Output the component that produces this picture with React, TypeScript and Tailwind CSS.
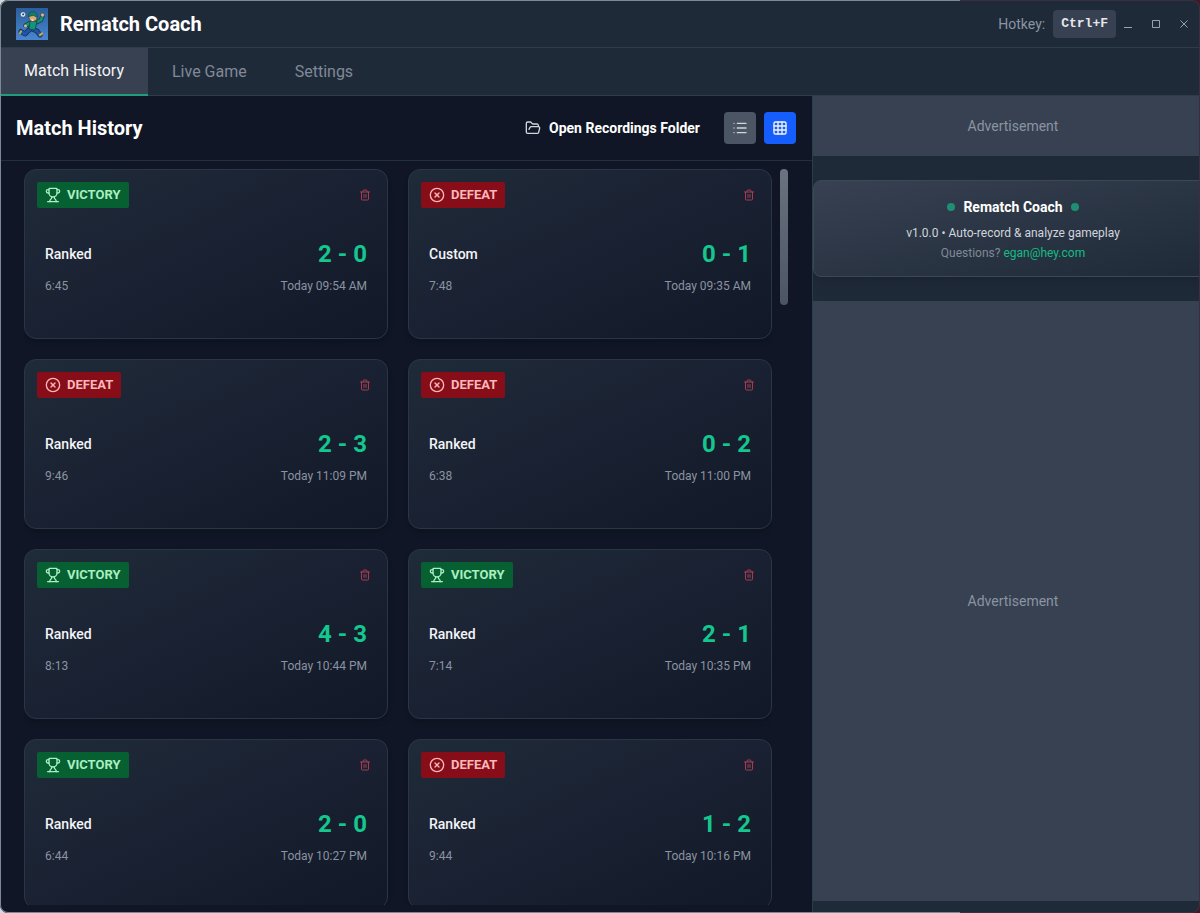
import { CircleX, FolderOpen, Grid3X3, List, Trash2, Trophy } from "lucide-react";

interface Match {
  result: "victory" | "defeat";
  mode: string;
  score: string;
  duration: string;
  playedAt: string;
}

const matches: Match[] = [
  { result: "victory", mode: "Ranked", score: "2 - 0", duration: "6:45", playedAt: "Today 09:54 AM" },
  { result: "defeat", mode: "Custom", score: "0 - 1", duration: "7:48", playedAt: "Today 09:35 AM" },
  { result: "defeat", mode: "Ranked", score: "2 - 3", duration: "9:46", playedAt: "Today 11:09 PM" },
  { result: "defeat", mode: "Ranked", score: "0 - 2", duration: "6:38", playedAt: "Today 11:00 PM" },
  { result: "victory", mode: "Ranked", score: "4 - 3", duration: "8:13", playedAt: "Today 10:44 PM" },
  { result: "victory", mode: "Ranked", score: "2 - 1", duration: "7:14", playedAt: "Today 10:35 PM" },
  { result: "victory", mode: "Ranked", score: "2 - 0", duration: "6:44", playedAt: "Today 10:27 PM" },
  { result: "defeat", mode: "Ranked", score: "1 - 2", duration: "9:44", playedAt: "Today 10:16 PM" },
];

function Logo() {
  return (
    <svg viewBox="0 0 32 32" className="size-8 shrink-0" aria-hidden="true">
      <defs>
        <linearGradient id="sky" x1="0" y1="0" x2="0" y2="1">
          <stop offset="0" stopColor="#2a5f9e" />
          <stop offset="1" stopColor="#4a86cf" />
        </linearGradient>
      </defs>
      <rect width="32" height="32" fill="url(#sky)" />
      <g strokeLinecap="round" strokeLinejoin="round" fill="none">
        <path d="M14 21 9 26 5 23.5M16 21l5 2 3 4" stroke="#17304f" strokeWidth="5" />
        <path d="M14 21 9 26 5 23.5M16 21l5 2 3 4" stroke="#1d55a8" strokeWidth="3.4" />
        <path d="m5 23.5-1 1.5M24 27l2-1.5" stroke="#c9a04e" strokeWidth="2.2" />
        <path d="M20 14.5 25 12l1.5-4M14 15l-4.5 2.5" stroke="#15433c" strokeWidth="4.5" />
        <path d="M20 14.5 25 12l1.5-4M14 15l-4.5 2.5" stroke="#15917a" strokeWidth="3" />
      </g>
      <path d="m14 13 7 .5-2 8.5-6-1z" fill="#13957c" stroke="#15433c" strokeWidth=".8" />
      <circle cx="26.5" cy="7" r="2" fill="#d9b48a" stroke="#2a3f50" strokeWidth=".6" />
      <circle cx="9.5" cy="18" r="1.5" fill="#d9b48a" />
      <circle cx="17" cy="9.5" r="4" fill="#d9a978" stroke="#2a3540" strokeWidth=".6" />
      <path d="M12 8.5c0-4 3-5.5 6-4.800 3 .8 4 3 3.5 5.800l-4-2z" fill="#127a68" stroke="#15433c" strokeWidth=".6" />
      <path d="m14.500 11.500 3.500.2-1.500 1.300z" fill="#fff" />
      <circle cx="7" cy="6.5" r="2.8" fill="#dbe7f5" stroke="#27456b" strokeWidth=".7" />
      <path d="m6 6 1.200-.8L8.300 6l-.5 1.300H6.500z" fill="#27456b" />
    </svg>
  );
}

function TitleBar() {
  return (
    <header className="flex h-12 shrink-0 items-center justify-between border-b border-[#2d3c4b] bg-[#1f2a39] pr-1 pl-4">
      <div className="flex items-center gap-3">
        <Logo />
        <h1 className="text-xl font-bold text-white">Rematch Coach</h1>
      </div>
      <div className="flex items-center">
        <span className="mr-2 text-sm text-[#8a94a3]">Hotkey:</span>
        <kbd className="rounded bg-[#374151] px-2 py-1 font-['Liberation_Mono',monospace] text-[13px] leading-5 font-bold text-gray-200">
          Ctrl+F
        </kbd>
        <div className="flex gap-1 text-[#98a1ae]">
          <button aria-label="Minimize" className="flex size-6 items-center justify-center">
            <svg viewBox="0 0 10 10" className="size-2.5" stroke="currentColor" fill="none">
              <path d="M1 8.5h8" />
            </svg>
          </button>
          <button aria-label="Maximize" className="flex size-6 items-center justify-center">
            <svg viewBox="0 0 10 10" className="size-2.5" stroke="currentColor" fill="none">
              <path d="M1.5 1.5h7v7h-7z" />
            </svg>
          </button>
          <button aria-label="Close" className="flex size-6 items-center justify-center">
            <svg viewBox="0 0 10 10" className="size-2.5" stroke="currentColor" fill="none">
              <path d="m1.5 1.5 7 7m0-7-7 7" />
            </svg>
          </button>
        </div>
      </div>
    </header>
  );
}

function Tabs() {
  return (
    <nav className="flex h-12 shrink-0 border-b border-[#2d3c4b] bg-[#1f2a39]">
      <button className="-mb-px border-b-2 border-[#1f9d7c] bg-[#374151] px-6 text-gray-100">Match History</button>
      <button className="px-6 text-[#7f8998]">Live Game</button>
      <button className="px-6 text-[#7f8998]">Settings</button>
    </nav>
  );
}

function ResultBadge({ result }: { result: Match["result"] }) {
  if (result === "victory") {
    return (
      <span className="flex items-center gap-1.5 rounded-xs bg-[#076032] px-2 py-1 text-[13px] leading-[18px] font-bold text-[#a9efc0]">
        <Trophy className="size-4" />
        VICTORY
      </span>
    );
  }
  return (
    <span className="flex items-center gap-1.5 rounded-xs bg-[#870d18] px-2 py-1 text-[13px] leading-[18px] font-bold text-[#fbb9bb]">
      <CircleX className="size-4" />
      DEFEAT
    </span>
  );
}

function MatchCard({ match }: { match: Match }) {
  return (
    <article className="h-[170px] rounded-xl border border-[#293643] bg-linear-to-br from-[#1f2b39] via-[#1a2132] to-[#111827] p-3 shadow-md">
      <div className="flex items-center justify-between">
        <ResultBadge result={match.result} />
        <button aria-label="Delete match" className="p-1 text-[#a63c50]">
          <Trash2 className="size-3" />
        </button>
      </div>
      <div className="px-2 pt-[30px]">
        <div className="flex items-center justify-between">
          <span className="text-sm font-medium text-gray-100">{match.mode}</span>
          <span className="text-2xl font-bold text-[#14c78f]">{match.score}</span>
        </div>
        <div className="mt-2 flex justify-between text-xs text-[#8a93a1]">
          <span>{match.duration}</span>
          <span>{match.playedAt}</span>
        </div>
      </div>
    </article>
  );
}

function MatchHistory() {
  return (
    <main className="flex min-w-0 flex-1 flex-col bg-[#101625]">
      <div className="flex shrink-0 items-center justify-between border-b border-[#242f3d] p-4">
        <h2 className="text-xl font-bold text-white">Match History</h2>
        <div className="flex items-center gap-2">
          <button className="mr-4 flex items-center gap-2 text-sm font-bold text-white">
            <FolderOpen className="size-4 text-gray-300" />
            Open Recordings Folder
          </button>
          <button aria-label="List view" className="flex size-8 items-center justify-center rounded bg-[#4b5563] text-gray-300">
            <List className="size-4" />
          </button>
          <button aria-label="Grid view" className="flex size-8 items-center justify-center rounded bg-[#155dfc] text-gray-100">
            <Grid3X3 className="size-4" />
          </button>
        </div>
      </div>
      <div className="flex min-h-0 flex-1 gap-2 px-6 py-2">
        <div className="grid flex-1 grid-cols-2 content-start gap-5 overflow-y-auto [scrollbar-width:none]">
          {matches.map((match) => (
            <MatchCard key={match.playedAt} match={match} />
          ))}
        </div>
        <div className="w-2">
          <div className="h-[136px] rounded-full bg-linear-to-b from-[#6b7280] to-[#4b5563]" />
        </div>
      </div>
    </main>
  );
}

function Sidebar() {
  return (
    <aside className="w-[388px] shrink-0 overflow-hidden border-l border-[#2d3c4b] bg-[#1f2a39]">
      <div className="w-[400px] text-center">
        <div className="flex h-[60px] items-center justify-center bg-[#374151] text-sm text-[#8a94a3]">
          Advertisement
        </div>
        <div className="my-6 rounded-lg border border-[#3b4856] bg-linear-to-br from-[#374151] to-[#1f2a39] pt-4 pb-[15px] text-xs shadow-lg">
          <div className="flex items-center justify-center gap-2 text-sm font-bold text-white">
            <span className="size-2 rounded-full bg-[#1f8f74]" />
            Rematch Coach
            <span className="size-2 rounded-full bg-[#1f8f74]" />
          </div>
          <p className="mt-2 text-gray-300">v1.0.0 • Auto-record &amp; analyze gameplay</p>
          <p className="mt-1 text-[#7f8997]">
            Questions?{" "}
            <a href="mailto:egan@hey.com" className="text-[#12bd84]">
              egan@hey.com
            </a>
          </p>
        </div>
        <div className="flex h-[600px] items-center justify-center bg-[#374151] text-sm text-[#8a94a3]">
          Advertisement
        </div>
      </div>
    </aside>
  );
}

export default function App() {
  return (
    <div className="relative h-screen bg-linear-to-r from-[#d5d9de] to-[#4a1426] font-['Roboto',sans-serif]">
      <div className="flex h-full flex-col overflow-hidden rounded-lg">
        <TitleBar />
        <Tabs />
        <div className="flex min-h-0 flex-1">
          <MatchHistory />
          <Sidebar />
        </div>
      </div>
      {/* window outline */}
      <div className="pointer-events-none absolute inset-y-0 left-0 w-4/5 rounded-l-lg border-y border-l border-[#7c8895]" />
      <div className="pointer-events-none absolute inset-y-0 right-0 w-1/5 rounded-r-lg border-y border-r border-[#3a2f40]" />
    </div>
  );
}
